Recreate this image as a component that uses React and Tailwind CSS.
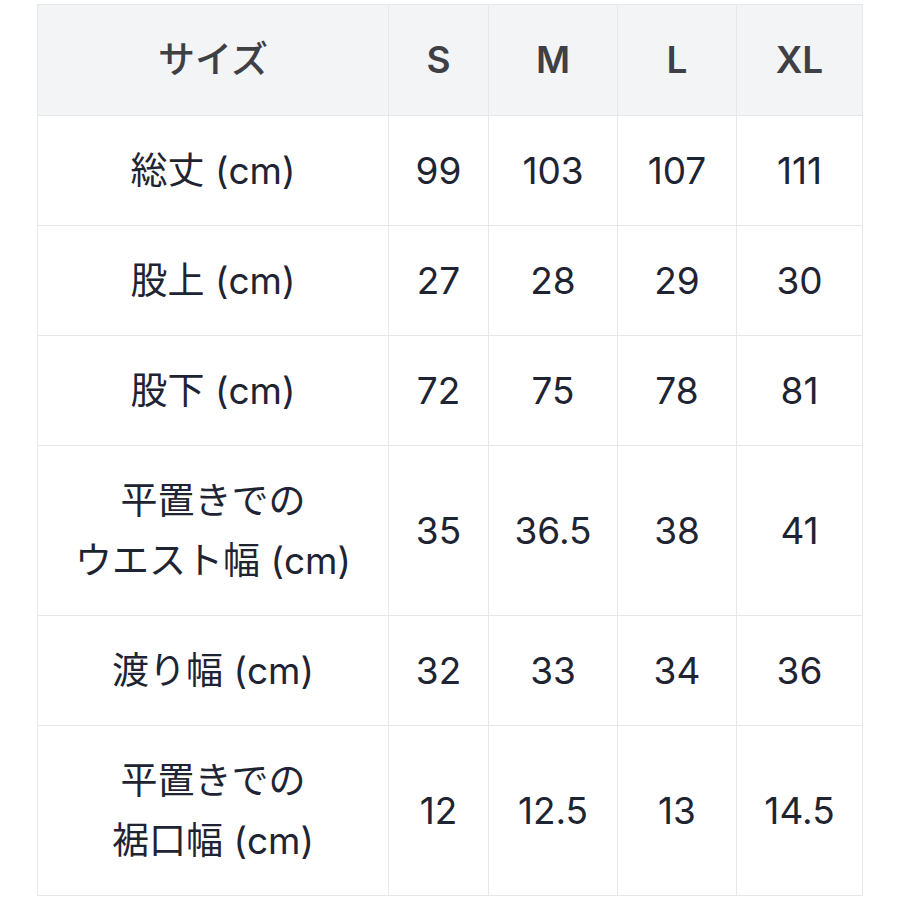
import React from 'react'

const sizes = ['S', 'M', 'L', 'XL']

const rows = [
  { label: ['総丈 (cm)'], values: ['99', '103', '107', '111'] },
  { label: ['股上 (cm)'], values: ['27', '28', '29', '30'] },
  { label: ['股下 (cm)'], values: ['72', '75', '78', '81'] },
  { label: ['平置きでの', 'ウエスト幅 (cm)'], values: ['35', '36.5', '38', '41'] },
  { label: ['渡り幅 (cm)'], values: ['32', '33', '34', '36'] },
  { label: ['平置きでの', '裾口幅 (cm)'], values: ['12', '12.5', '13', '14.5'] },
]

const font = { fontFamily: 'Inter, "Noto Sans CJK JP", "Noto Sans", sans-serif' }

export default function App() {
  return (
    <div className="min-h-screen bg-white pl-[37px] pt-[4px]" style={font}>
      <table className="w-[825px] table-fixed border-collapse border border-[#e5e7eb] text-[37px] leading-[60px]">
        <colgroup>
          <col className="w-[351px]" />
          <col className="w-[100px]" />
          <col className="w-[129px]" />
          <col className="w-[119px]" />
          <col className="w-[126px]" />
        </colgroup>
        <thead>
          <tr className="bg-[#f3f4f6]">
            <th className="border border-[#e5e7eb] py-[25px] text-center font-medium text-[#3f3f46]">サイズ</th>
            {sizes.map((s) => (
              <th key={s} className="border border-[#e5e7eb] py-[25px] text-center font-semibold text-[#3f3f46]">
                {s}
              </th>
            ))}
          </tr>
        </thead>
        <tbody>
          {rows.map((row, i) => (
            <tr key={i}>
              <td className="border border-[#e5e7eb] py-[24.5px] text-center text-[#1f2433]">
                {row.label.map((line, j) => (
                  <div key={j} className="whitespace-nowrap">{line}</div>
                ))}
              </td>
              {row.values.map((v, j) => (
                <td key={j} className="border border-[#e5e7eb] py-[24.5px] text-center text-[#1f2433]">
                  {v}
                </td>
              ))}
            </tr>
          ))}
        </tbody>
      </table>
    </div>
  )
}
